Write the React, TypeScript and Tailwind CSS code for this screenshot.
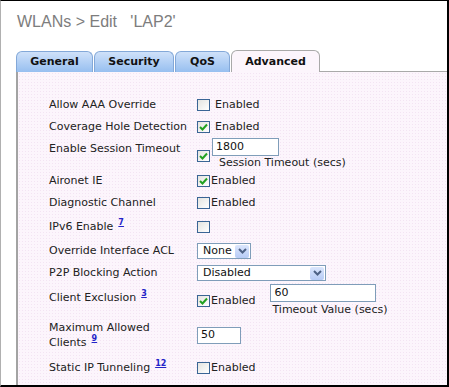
import React from "react";

const font = "font-['DejaVu_Sans',Verdana,sans-serif]";

function Check({ checked = false }: { checked?: boolean }) {
  return (
    <span className="inline-flex h-[12px] w-[13px] shrink-0 items-center justify-center border border-[#3a6595] bg-gradient-to-br from-[#e4e4e0] to-white">
      {checked && (
        <svg width="9" height="8" viewBox="0 0 9 8">
          <path d="M1 4 L3.5 6.5 L8 1.5" fill="none" stroke="#21a121" strokeWidth="2" />
        </svg>
      )}
    </span>
  );
}

function Sup({ n }: { n: string }) {
  return (
    <a className="relative -top-[5px] ml-[5px] text-[8px] font-bold text-[#2424c8] underline">
      {n}
    </a>
  );
}

function TextBox({ value, className }: { value: string; className: string }) {
  return (
    <span className={`flex items-center border border-[#7f9db9] bg-white pl-[3px] text-[11px] text-[#111] ${className}`}>
      {value}
    </span>
  );
}

function Select({ value, w }: { value: string; w: string }) {
  return (
    <span className={`flex h-[16px] items-center justify-between border border-[#7f9db9] bg-white pl-[5px] pr-[1px] text-[11px] text-[#111] ${w}`}>
      {value}
      <span className="flex h-[13px] w-[14px] items-center justify-center rounded-[2px] bg-gradient-to-b from-[#dbe6fc] to-[#b7cbf6]">
        <svg width="9" height="6" viewBox="0 0 9 6">
          <path d="M1 1 L4.5 4.5 L8 1" fill="none" stroke="#4d6185" strokeWidth="2" />
        </svg>
      </span>
    </span>
  );
}

function Row({ label, h, children }: { label: React.ReactNode; h: string; children: React.ReactNode }) {
  return (
    <div className={`grid grid-cols-[148px_1fr] ${h}`}>
      <div className="flex items-center">{label}</div>
      <div className="flex items-center">{children}</div>
    </div>
  );
}

const tabs = [
  { name: "General", w: "w-[77px]" },
  { name: "Security", w: "w-[80px]" },
  { name: "QoS", w: "w-[55px]" },
];

export default function App() {
  return (
    <div className={`flex h-[387px] w-[449px] flex-col overflow-hidden border-t border-l border-r-2 border-b-2 border-t-black border-l-[#b0b0b0] border-r-black border-b-black bg-white ${font}`}>
      <h1 className="pl-[16px] pt-[11px] font-['Liberation_Sans',Arial,sans-serif] text-[16px] leading-[20px] text-[#7d7d7d]">
        WLANs &gt; Edit&nbsp;&nbsp; 'LAP2'
      </h1>
      <div className="mt-[18px] flex flex-1 flex-col pl-[15px]">
        <div className="flex h-[22px] items-end">
          {tabs.map((t) => (
            <div
              key={t.name}
              className={`mr-[1px] flex h-[21px] items-center justify-center rounded-t-[6px] border border-b-0 border-[#83a8d8] bg-gradient-to-b from-[#cfe1f9] to-[#97bff0] pt-[1px] text-[11px] font-bold text-[#111] ${t.w}`}
            >
              {t.name}
            </div>
          ))}
          <div className="flex h-[22px] w-[89px] items-center justify-center rounded-t-[6px] border border-b-0 border-[#a9a9a9] bg-[#fcf5fc] pt-[1px] text-[11px] font-bold text-[#111]">
            Advanced
          </div>
          <div className="h-full flex-1 border-b border-[#a9a9a9]" />
        </div>
        <div className="flex-1 border-l-2 border-[#a3a3a3] bg-[#fcf5fc] bg-[radial-gradient(#f3e4f3_0.6px,transparent_0.6px)] bg-[length:3px_3px] pl-[31px] pt-[22px] text-[11px] text-[#222]">
          <Row label="Allow AAA Override" h="h-[22px]">
            <Check />
            <span className="ml-[5px]">Enabled</span>
          </Row>
          <Row label="Coverage Hole Detection" h="h-[22px]">
            <Check checked />
            <span className="ml-[5px]">Enabled</span>
          </Row>
          <div className="grid h-[32px] grid-cols-[148px_1fr]">
            <div className="flex h-[22px] items-center">Enable Session Timeout</div>
            <div className="flex items-start">
              <span className="mt-[11px]">
                <Check checked />
              </span>
              <div className="ml-[2px] flex flex-col">
                <TextBox value="1800" className="h-[18px] w-[67px]" />
                <span className="ml-[7px] leading-[13px]">Session Timeout (secs)</span>
              </div>
            </div>
          </div>
          <Row label="Aironet IE" h="h-[22px]">
            <Check checked />
            <span className="ml-[1px]">Enabled</span>
          </Row>
          <Row label="Diagnostic Channel" h="h-[22px]">
            <Check />
            <span className="ml-[1px]">Enabled</span>
          </Row>
          <Row
            label={
              <span>
                IPv6 Enable<Sup n="7" />
              </span>
            }
            h="h-[26px]"
          >
            <Check />
          </Row>
          <Row label="Override Interface ACL" h="h-[22px]">
            <Select value="None" w="w-[54px]" />
          </Row>
          <Row label="P2P Blocking Action" h="h-[22px]">
            <Select value="Disabled" w="w-[129px]" />
          </Row>
          <div className="grid h-[32px] grid-cols-[148px_1fr]">
            <div className="flex h-[28px] items-center">
              <span>
                Client Exclusion<Sup n="3" />
              </span>
            </div>
            <div className="flex items-start">
              <div className="mt-[9px] flex items-center">
                <Check checked />
                <span className="ml-[1px]">Enabled</span>
              </div>
              <div className="ml-[15px] flex flex-col">
                <TextBox value="60" className="h-[18px] w-[106px]" />
                <span className="ml-[2px] leading-[15px]">Timeout Value (secs)</span>
              </div>
            </div>
          </div>
          <div className="grid h-[41px] grid-cols-[148px_1fr]">
            <div className="pt-[4px] leading-[15px]">
              Maximum Allowed
              <br />
              Clients<Sup n="9" />
            </div>
            <div className="pt-[11px]">
              <TextBox value="50" className="h-[17px] w-[44px]" />
            </div>
          </div>
          <Row
            label={
              <span>
                Static IP Tunneling<Sup n="12" />
              </span>
            }
            h="h-[22px]"
          >
            <Check />
            <span className="ml-[1px]">Enabled</span>
          </Row>
        </div>
      </div>
    </div>
  );
}
